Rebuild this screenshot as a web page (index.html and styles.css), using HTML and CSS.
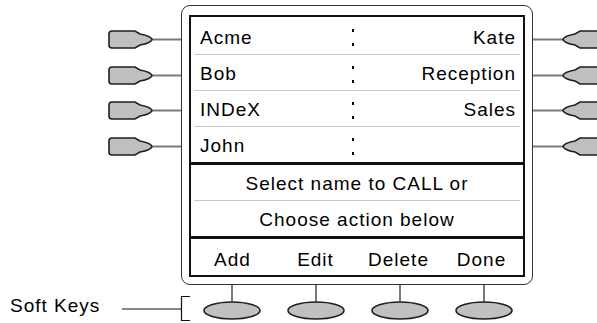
FILE: index.html
```html
<!DOCTYPE html>
<html lang="en">

<head>
    <meta charset="UTF-8">
    <meta name="viewport" content="width=device-width, initial-scale=1.0">
    <title>Directory</title>
    <link rel="stylesheet" href="styles.css">
</head>

<body>
    <div class="phone">
        <div class="top">
            <!-- line keys, left side -->
            <div class="keys">
                <svg class="key" width="73" height="19" viewBox="0 0 73 19"><path class="stem" d="M44 9.5H73"/><path class="btn" d="M44 9.5Q43 6 32 4L27 1H4Q1 1 1 4V15Q1 18 4 18H27L32 15Q43 13 44 9.5Z"/></svg>
                <svg class="key" width="73" height="19" viewBox="0 0 73 19"><path class="stem" d="M44 9.5H73"/><path class="btn" d="M44 9.5Q43 6 32 4L27 1H4Q1 1 1 4V15Q1 18 4 18H27L32 15Q43 13 44 9.5Z"/></svg>
                <svg class="key" width="73" height="19" viewBox="0 0 73 19"><path class="stem" d="M44 9.5H73"/><path class="btn" d="M44 9.5Q43 6 32 4L27 1H4Q1 1 1 4V15Q1 18 4 18H27L32 15Q43 13 44 9.5Z"/></svg>
                <svg class="key" width="73" height="19" viewBox="0 0 73 19"><path class="stem" d="M44 9.5H73"/><path class="btn" d="M44 9.5Q43 6 32 4L27 1H4Q1 1 1 4V15Q1 18 4 18H27L32 15Q43 13 44 9.5Z"/></svg>
            </div>

            <div class="screen">
                <div class="lcd">
                    <div class="names">
                        <div class="name-row"><span>Acme</span><span class="colon"><i></i><i></i></span><span class="right">Kate</span></div>
                        <div class="name-row"><span>Bob</span><span class="colon"><i></i><i></i></span><span class="right">Reception</span></div>
                        <div class="name-row"><span>INDeX</span><span class="colon"><i></i><i></i></span><span class="right">Sales</span></div>
                        <div class="name-row"><span>John</span><span class="colon"><i></i><i></i></span><span class="right"></span></div>
                    </div>
                    <div class="msg">
                        <div class="msg-row">Select name to CALL or</div>
                        <div class="msg-row">Choose action below</div>
                    </div>
                    <div class="labels">
                        <span>Add</span>
                        <span>Edit</span>
                        <span>Delete</span>
                        <span>Done</span>
                    </div>
                </div>
            </div>

            <!-- line keys, right side -->
            <div class="keys">
                <svg class="key" width="64" height="19" viewBox="0 0 64 19"><path class="stem" d="M0 9.5H30"/><path class="btn" d="M30 9.5Q31 6 42 4L47 1H66V18H47L42 15Q31 13 30 9.5Z"/></svg>
                <svg class="key" width="64" height="19" viewBox="0 0 64 19"><path class="stem" d="M0 9.5H30"/><path class="btn" d="M30 9.5Q31 6 42 4L47 1H66V18H47L42 15Q31 13 30 9.5Z"/></svg>
                <svg class="key" width="64" height="19" viewBox="0 0 64 19"><path class="stem" d="M0 9.5H30"/><path class="btn" d="M30 9.5Q31 6 42 4L47 1H66V18H47L42 15Q31 13 30 9.5Z"/></svg>
                <svg class="key" width="64" height="19" viewBox="0 0 64 19"><path class="stem" d="M0 9.5H30"/><path class="btn" d="M30 9.5Q31 6 42 4L47 1H66V18H47L42 15Q31 13 30 9.5Z"/></svg>
            </div>
        </div>

        <div class="bottom">
            <span class="soft-title">Soft Keys</span>
            <svg class="bracket" width="68" height="38" viewBox="0 0 68 38"><path d="M0 24H59.5M68 11.5H59.5V35.5H68"/></svg>
            <div class="soft-keys">
                <svg width="84" height="38" viewBox="0 0 84 38"><path class="stem" d="M42 0V17"/><ellipse class="btn" cx="42" cy="25.5" rx="28" ry="8.5"/></svg>
                <svg width="84" height="38" viewBox="0 0 84 38"><path class="stem" d="M42 0V17"/><ellipse class="btn" cx="42" cy="25.5" rx="28" ry="8.5"/></svg>
                <svg width="84" height="38" viewBox="0 0 84 38"><path class="stem" d="M42 0V17"/><ellipse class="btn" cx="42" cy="25.5" rx="28" ry="8.5"/></svg>
                <svg width="84" height="38" viewBox="0 0 84 38"><path class="stem" d="M42 0V17"/><ellipse class="btn" cx="42" cy="25.5" rx="28" ry="8.5"/></svg>
            </div>
        </div>
    </div>
</body>

</html>
```

FILE: styles.css
```css
* {
    margin: 0;
    padding: 0;
    box-sizing: border-box;
}

body {
    background-color: #fff;
    color: #000;
    font: 19px "Liberation Sans", Arial, sans-serif;
    letter-spacing: 1px;
}

.phone {
    width: 597px;
    height: 323px;
    overflow: hidden;
}

.top {
    display: flex;
    align-items: flex-start;
    padding: 5px 0 0 108px;
}

.keys {
    display: flex;
    flex-direction: column;
    gap: 16.5px;
    padding-top: 25px;
}

.keys svg,
.soft-keys svg,
.bracket {
    display: block;
}

.stem {
    stroke: #7a7a7a;
    stroke-width: 2;
    fill: none;
}

.btn {
    fill: #c0c0c0;
    stroke: #1e1e1e;
    stroke-width: 1.6;
}

.screen {
    width: 352px;
    height: 280px;
    border: 1px solid #333;
    border-radius: 9px;
    padding: 9px 7px 7px;
}

.lcd {
    height: 100%;
    border: 2px solid #111;
}

.names {
    border-bottom: 3px solid #111;
}

.name-row {
    height: 36px;
    margin: 0 3px;
    padding: 3px 5px 0 6px;
    border-top: 1px solid #c8c8c8;
    display: grid;
    grid-template-columns: 148px 10px 1fr;
    align-items: center;
}

.name-row:first-child {
    height: 37px;
    padding-top: 4px;
    border-top: none;
}

.right {
    text-align: right;
    margin-right: -1px;
}

.colon {
    height: 17px;
    display: flex;
    flex-direction: column;
    justify-content: space-between;
    align-items: center;
}

.colon i {
    width: 2px;
    height: 3px;
    background-color: #000;
}

.msg {
    border-bottom: 3px solid #111;
}

.msg-row {
    height: 35px;
    margin: 0 3px;
    padding-top: 3px;
    display: flex;
    align-items: center;
    justify-content: center;
}

.msg-row + .msg-row {
    height: 36px;
    border-top: 1px solid #c8c8c8;
}

.labels {
    height: 36px;
    padding-top: 5px;
    display: grid;
    grid-template-columns: repeat(4, 1fr);
    align-items: center;
    text-align: center;
}

.bottom {
    display: flex;
    align-items: flex-start;
    height: 38px;
}

.soft-title {
    width: 122px;
    padding: 2px 0 0 10px;
    line-height: 38px;
}

.bracket path {
    stroke: #111;
    stroke-width: 1.2;
    fill: none;
}

.soft-keys {
    display: flex;
}
```
